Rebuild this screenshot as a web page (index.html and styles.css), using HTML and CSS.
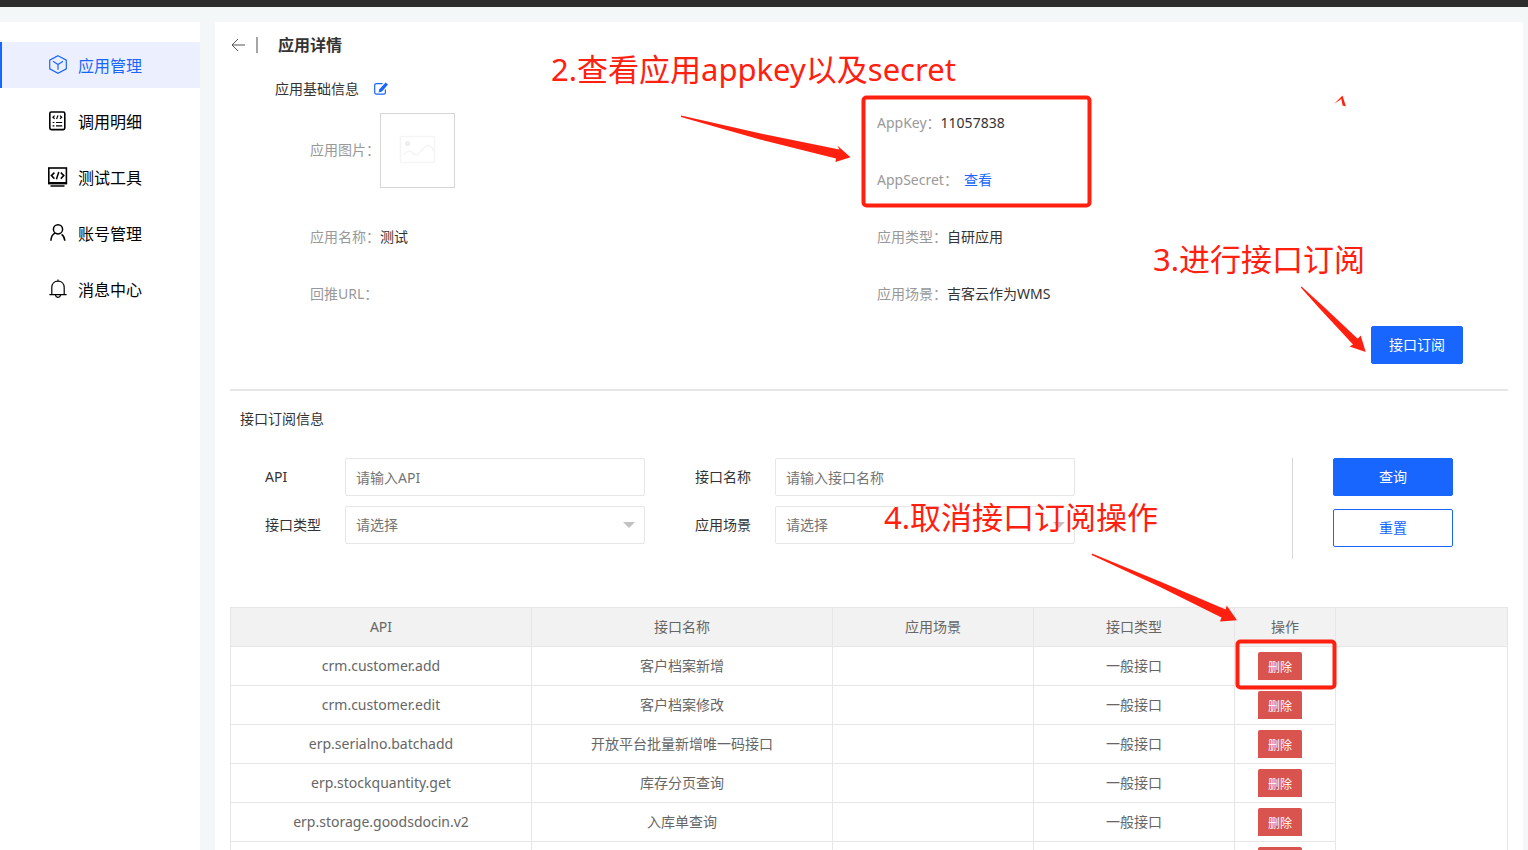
FILE: index.html
```html
<!DOCTYPE html>
<html lang="zh-CN">
<head>
    <meta charset="UTF-8">
    <meta name="viewport" content="width=device-width, initial-scale=1.0">
    <title>应用详情</title>
    <link rel="stylesheet" href="styles.css">
</head>
<body>
    <div class="topbar"></div>
    <div class="layout">
        <nav class="sidebar">
            <a class="menu-item active" href="#">
                <svg class="menu-icon" viewBox="0 0 20 20"><path d="M10 0.7L18.3 5.1V13.9L10 18.3L1.7 13.9V5.1ZM5 6.3L10 9.500L15 6.300M10 9.500V14.700"/></svg>
                应用管理
            </a>
            <a class="menu-item" href="#">
                <svg class="menu-icon" viewBox="0 0 20 20"><rect x="1.8" y="1" width="15" height="17.6" rx="1.5" stroke-width="1.6"/><path d="M6.6 4.6L4.9 6.2L6.6 7.8M12 4.6L13.7 6.2L12 7.8M10 4.4L8.6 8M4.6 11.5H6.4M8 11.5H14.2M4.6 14.8H6.4M8 14.8H14.2"/></svg>
                调用明细
            </a>
            <a class="menu-item" href="#">
                <svg class="menu-icon" viewBox="0 0 20 20"><rect x="0.8" y="1" width="17.6" height="15.6" stroke-width="1.6"/><path d="M2.5 19H16.5M1 15.8H18" stroke-width="1.4"/><path d="M6.4 5.6L3.4 8.6L6.4 11.6M12.8 5.6L15.8 8.6L12.8 11.6M10.8 5L8.4 12.2" stroke-width="1.5"/></svg>
                测试工具
            </a>
            <a class="menu-item" href="#">
                <svg class="menu-icon" viewBox="0 0 20 20"><circle cx="10" cy="6.3" r="4.6" stroke-width="1.5"/><path d="M7 10.2C4.4 11.5 3.1 14 2.9 17.8M13.6 11.4C15.7 12.8 16.6 14.8 16.8 17.8" stroke-width="1.5"/></svg>
                账号管理
            </a>
            <a class="menu-item" href="#">
                <svg class="menu-icon" viewBox="0 0 20 20"><path d="M1.400 15.700H18.600M3.800 15.500V8.400C3.800 4.800 6.400 2.200 10 2.200S16.200 4.800 16.200 8.400V15.500M10 2.200V0.400M7.400 16.200C8 19 12 19 12.600 16.200"/></svg>
                消息中心
            </a>
        </nav>

        <main class="content">
            <header class="page-header">
                <a class="back" href="#" aria-label="返回">
                    <svg viewBox="0 0 14 14"><path d="M14 7H1M7 1L1 7L7 13"/></svg>
                </a>
                <h1>应用详情</h1>
            </header>

            <div class="section-title">
                <h2>应用基础信息</h2>
                <button class="edit" type="button" aria-label="编辑">
                    <svg viewBox="0 0 14 14"><path d="M8.5 1.600H2.400Q0.700 1.600 0.700 3.200V10.500Q0.700 12.100 2.400 12.100H9.800Q11.400 12.100 11.400 10.500V7.500" fill="none" stroke="currentColor" stroke-width="1.2"/><path d="M11.600 0.600L14 2.600L8 9.400L4.600 10.600L5.400 7.200Z" fill="currentColor"/></svg>
                </button>
            </div>

            <div class="info">
                <div class="info-item picture">
                    <span class="info-label">应用图片：</span>
                    <div class="app-picture">
                        <svg viewBox="0 0 38 30"><rect x="1.5" y="1.5" width="34" height="26" rx="1"/><path d="M5 20C8 15 11 15 14 18S18 21 22 16S31 6 35 17"/><circle cx="8.5" cy="8.5" r="1.8"/></svg>
                    </div>
                </div>
                <div class="info-item"><span class="info-label">AppKey：</span><span>11057838</span></div>
                <div class="info-item"><span class="info-label">AppSecret：</span><a class="view" href="#">查看</a></div>
                <div class="info-item"><span class="info-label">应用名称：</span><span>测试</span></div>
                <div class="info-item"><span class="info-label">应用类型：</span><span>自研应用</span></div>
                <div class="info-item"><span class="info-label">回推URL：</span></div>
                <div class="info-item"><span class="info-label">应用场景：</span><span>吉客云作为WMS</span></div>
            </div>

            <div class="info-actions">
                <button class="btn" type="button">接口订阅</button>
            </div>

            <h2 class="list-title">接口订阅信息</h2>

            <form class="search">
                <div class="fields">
                    <label for="api">API</label>
                    <input type="text" id="api" placeholder="请输入API">
                    <label for="apiName">接口名称</label>
                    <input type="text" id="apiName" placeholder="请输入接口名称">
                    <label for="apiType">接口类型</label>
                    <div class="select-box">
                        <select id="apiType"><option>请选择</option></select>
                    </div>
                    <label for="scene">应用场景</label>
                    <div class="select-box">
                        <select id="scene"><option>请选择</option></select>
                    </div>
                </div>
                <div class="search-buttons">
                    <button class="btn" type="button">查询</button>
                    <button class="btn btn-plain" type="reset">重置</button>
                </div>
            </form>

            <table>
                <colgroup>
                    <col class="col-wide">
                    <col class="col-wide">
                    <col class="col-mid">
                    <col class="col-mid">
                    <col class="col-small">
                    <col>
                </colgroup>
                <thead>
                    <tr>
                        <th>API</th>
                        <th>接口名称</th>
                        <th>应用场景</th>
                        <th>接口类型</th>
                        <th>操作</th>
                        <th></th>
                    </tr>
                </thead>
                <tbody>
                    <tr>
                        <td>crm.customer.add</td>
                        <td>客户档案新增</td>
                        <td></td>
                        <td>一般接口</td>
                        <td class="action"><button class="delete" type="button">删除</button></td>
                        <td class="blank"></td>
                    </tr>
                    <tr>
                        <td>crm.customer.edit</td>
                        <td>客户档案修改</td>
                        <td></td>
                        <td>一般接口</td>
                        <td class="action"><button class="delete" type="button">删除</button></td>
                        <td class="blank"></td>
                    </tr>
                    <tr>
                        <td>erp.serialno.batchadd</td>
                        <td>开放平台批量新增唯一码接口</td>
                        <td></td>
                        <td>一般接口</td>
                        <td class="action"><button class="delete" type="button">删除</button></td>
                        <td class="blank"></td>
                    </tr>
                    <tr>
                        <td>erp.stockquantity.get</td>
                        <td>库存分页查询</td>
                        <td></td>
                        <td>一般接口</td>
                        <td class="action"><button class="delete" type="button">删除</button></td>
                        <td class="blank"></td>
                    </tr>
                    <tr>
                        <td>erp.storage.goodsdocin.v2</td>
                        <td>入库单查询</td>
                        <td></td>
                        <td>一般接口</td>
                        <td class="action"><button class="delete" type="button">删除</button></td>
                        <td class="blank"></td>
                    </tr>
                    <tr>
                        <td></td>
                        <td></td>
                        <td></td>
                        <td></td>
                        <td class="action"><button class="delete" type="button" aria-label="删除"></button></td>
                        <td class="blank"></td>
                    </tr>
                </tbody>
            </table>
        </main>
    </div>

    <!-- 操作步骤标注 -->
    <div class="notes">
        <svg class="note-marks" width="1528" height="850" viewBox="0 0 1528 850">
            <g class="frames">
                <rect x="863.5" y="97.5" width="226" height="108" rx="3"/>
                <rect x="1237.5" y="641.5" width="97" height="46" rx="3"/>
            </g>
            <path d="M681 115.5L763 134L839.3 149.5L837.3 145.5L850.5 157.3L835.5 162L836 158.5L760 139.500L681 117Z"/>
            <path d="M1301.500 286.500L1324 307L1357.700 338.700L1360.700 335.500L1365.700 352L1349.500 346.500L1353 344.500L1320 309L1300.800 287.500Z"/>
            <path d="M1092 553.5L1160 581.5L1225.700 609.500L1226.700 605.500L1237 620.200L1220 621.500L1221.500 617.500L1158 586L1091.600 555Z"/>
            <path d="M1334 104L1342.500 95.500L1345.900 106.500L1342.600 105.500L1341.300 99Z"/>
        </svg>
        <span class="note note-view">2.查看应用appkey以及secret</span>
        <span class="note note-subscribe">3.进行接口订阅</span>
        <span class="note note-cancel">4.取消接口订阅操作</span>
    </div>
</body>
</html>
```
FILE: styles.css
```css
* {
    box-sizing: border-box;
}
body {
    margin: 0;
    height: 100vh;
    overflow: hidden;
    display: flex;
    flex-direction: column;
    position: relative;
    background-color: #f3f7f8;
    color: #333;
    font-family: "Noto Sans", "Noto Sans CJK SC", sans-serif;
    font-size: 14px;
    line-height: 20px;
}
a {
    color: inherit;
    text-decoration: none;
}
h1, h2 {
    margin: 0;
    font-size: 14px;
    font-weight: normal;
}
button, input, select {
    font: inherit;
}
button {
    cursor: pointer;
}
.topbar {
    flex: none;
    height: 7px;
    background-color: #2d2d2d;
}
.layout {
    flex: 1;
    min-height: 0;
    display: flex;
    gap: 15px;
    padding: 15px 5px 0 0;
}

/* 左侧菜单 */
.sidebar {
    flex: none;
    width: 200px;
    padding-top: 20px;
    display: flex;
    flex-direction: column;
    gap: 10px;
    background-color: #fff;
}
.menu-item {
    display: flex;
    align-items: center;
    gap: 10px;
    height: 46px;
    padding: 2px 0 0 46px;
    border-left: 2px solid transparent;
    color: #000;
    font-size: 16px;
}
.menu-item.active {
    border-left-color: #1966ff;
    background-color: #ecf0fe;
    color: #1966ff;
}
.menu-icon {
    width: 20px;
    height: 20px;
    margin-bottom: 3px;
    fill: none;
    stroke: currentColor;
    stroke-width: 1.2;
}

/* 应用信息 */
.content {
    flex: 1;
    min-width: 0;
    padding: 0 15px;
    background-color: #fff;
}
.page-header {
    display: flex;
    align-items: center;
    height: 46px;
}
.page-header h1 {
    padding-left: 20px;
    font-size: 16px;
    font-weight: bold;
}
.back {
    display: flex;
    width: 28px;
    height: 16px;
    align-items: center;
    border-right: 2px solid #a6a6a6;
}
.back svg {
    width: 16px;
    height: 14px;
    fill: none;
    stroke: #555;
}
.section-title {
    display: flex;
    align-items: center;
    gap: 15px;
    padding: 12px 0 0 45px;
    height: 30px;
}
.edit {
    display: flex;
    padding: 0;
    border: none;
    background: none;
    color: #1966ff;
}
.edit svg {
    width: 14px;
    height: 14px;
}
.info {
    display: grid;
    grid-template-columns: 1fr 1fr;
    grid-auto-rows: 57px;
    margin-top: -4px;
    padding: 0 64px 0 80px;
}
.info-item {
    display: flex;
    align-items: center;
}
.picture {
    grid-row: span 2;
    padding-bottom: 2px;
}
.info-label {
    color: #999;
}
.app-picture {
    display: flex;
    align-items: center;
    justify-content: center;
    width: 75px;
    height: 75px;
    border: 1px solid #d6d6d6;
}
.app-picture svg {
    width: 38px;
    height: 30px;
    fill: none;
    stroke: #f5f5f5;
    stroke-width: 1.6;
}
.app-picture circle {
    fill: #eee;
    stroke: #eee;
}
.view {
    padding-left: 6px;
    color: #1966ff;
}
.info-actions {
    display: flex;
    justify-content: flex-end;
    padding: 4px 45px 25px 0;
    border-bottom: 2px solid #e6e6e6;
}
.btn {
    height: 38px;
    padding: 0 17px;
    border: 1px solid #1966ff;
    border-radius: 2px;
    background-color: #1966ff;
    color: #fff;
}
.btn-plain {
    background-color: #fff;
    color: #1966ff;
}

/* 查询条件 */
.list-title {
    padding: 18px 10px 0;
}
.search {
    display: flex;
    justify-content: space-between;
    padding: 29px 55px 48px 35px;
}
.fields {
    display: grid;
    grid-template-columns: 80px 300px 130px 300px;
    grid-auto-rows: 38px;
    row-gap: 10px;
    align-items: center;
}
.fields label:nth-of-type(even) {
    padding-left: 50px;
}
.fields input, .fields select {
    display: block;
    width: 100%;
    height: 38px;
    padding: 0 10px;
    border: 1px solid #e6e6e6;
    border-radius: 2px;
    background-color: #fff;
    color: #757575;
}
.fields input::placeholder {
    color: #757575;
}
.fields select {
    appearance: none;
}
.select-box {
    position: relative;
}
.select-box::after {
    content: "";
    position: absolute;
    top: 16px;
    right: 10px;
    border: 6px solid transparent;
    border-top-color: #c2c2c2;
    border-bottom: none;
    pointer-events: none;
}
.search-buttons {
    display: flex;
    flex-direction: column;
    gap: 13px;
    height: 101px;
    padding-left: 40px;
    border-left: 1px solid #d6d6d6;
}
.search-buttons .btn {
    width: 120px;
}

/* 接口列表 */
table {
    width: 100%;
    table-layout: fixed;
    border-collapse: collapse;
    color: #666;
}
.col-wide {
    width: 301px;
}
.col-mid {
    width: 201px;
}
.col-small {
    width: 101px;
}
th, td {
    height: 39px;
    padding: 0;
    border: 1px solid #e6e6e6;
    font-weight: normal;
    text-align: center;
}
th {
    background-color: #f2f2f2;
}
td.blank {
    border-top: none;
    border-bottom: none;
}
td.action {
    padding-right: 10px;
}
.delete {
    display: block;
    width: 44px;
    height: 28px;
    margin: 0 auto;
    padding: 3px 0 0;
    border: none;
    border-radius: 2px 2px 0 0;
    background-color: #d9534f;
    color: #fff;
    font-size: 12px;
}

/* 标注 */
.notes {
    position: absolute;
    top: 0;
    left: 0;
    pointer-events: none;
}
.note-marks {
    display: block;
    fill: #ff2010;
}
.frames {
    fill: none;
    stroke: #ff2010;
    stroke-width: 4;
}
.note {
    position: absolute;
    color: #ff2010;
    font-size: 31px;
    line-height: 40px;
    white-space: nowrap;
}
.note-view {
    top: 49px;
    left: 551px;
}
.note-subscribe {
    top: 239px;
    left: 1153px;
}
.note-cancel {
    top: 497px;
    left: 884px;
}
```
